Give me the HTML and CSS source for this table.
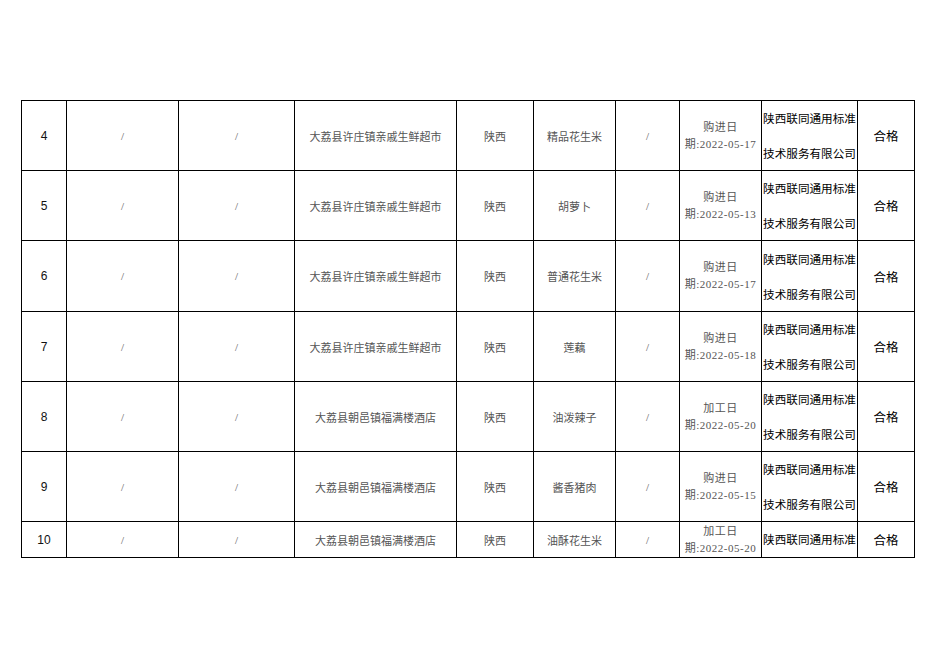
FILE: index.html
```html
<!DOCTYPE html>
<html lang="zh">
<head>
<meta charset="utf-8">
<link rel="stylesheet" href="styles.css">
</head>
<body>
<div class="page">
<table class="grid">
<colgroup>
<col class="c1"><col class="c2"><col class="c3"><col class="c4"><col class="c5"><col class="c6"><col class="c7"><col class="c8"><col class="c9"><col class="c10">
</colgroup>
<tbody>
<tr class="r70"><td class="num">4</td><td class="ser">/</td><td class="ser">/</td><td class="ser">大荔县许庄镇亲戚生鲜超市</td><td class="ser">陕西</td><td class="ser">精品花生米</td><td class="ser">/</td><td class="ser date">购进日<br>期:2022-05-17</td><td class="co"><div class="cobox">陕西联同通用标准技术服务有限公司</div></td><td class="res">合格</td></tr>
<tr class="r70"><td class="num">5</td><td class="ser">/</td><td class="ser">/</td><td class="ser">大荔县许庄镇亲戚生鲜超市</td><td class="ser">陕西</td><td class="ser">胡萝卜</td><td class="ser">/</td><td class="ser date">购进日<br>期:2022-05-13</td><td class="co"><div class="cobox">陕西联同通用标准技术服务有限公司</div></td><td class="res">合格</td></tr>
<tr class="r71"><td class="num">6</td><td class="ser">/</td><td class="ser">/</td><td class="ser">大荔县许庄镇亲戚生鲜超市</td><td class="ser">陕西</td><td class="ser">普通花生米</td><td class="ser">/</td><td class="ser date">购进日<br>期:2022-05-17</td><td class="co"><div class="cobox">陕西联同通用标准技术服务有限公司</div></td><td class="res">合格</td></tr>
<tr class="r70"><td class="num">7</td><td class="ser">/</td><td class="ser">/</td><td class="ser">大荔县许庄镇亲戚生鲜超市</td><td class="ser">陕西</td><td class="ser">莲藕</td><td class="ser">/</td><td class="ser date">购进日<br>期:2022-05-18</td><td class="co"><div class="cobox">陕西联同通用标准技术服务有限公司</div></td><td class="res">合格</td></tr>
<tr class="r70"><td class="num">8</td><td class="ser">/</td><td class="ser">/</td><td class="ser">大荔县朝邑镇福满楼酒店</td><td class="ser">陕西</td><td class="ser">油泼辣子</td><td class="ser">/</td><td class="ser date">加工日<br>期:2022-05-20</td><td class="co"><div class="cobox">陕西联同通用标准技术服务有限公司</div></td><td class="res">合格</td></tr>
<tr class="r70"><td class="num">9</td><td class="ser">/</td><td class="ser">/</td><td class="ser">大荔县朝邑镇福满楼酒店</td><td class="ser">陕西</td><td class="ser">酱香猪肉</td><td class="ser">/</td><td class="ser date">购进日<br>期:2022-05-15</td><td class="co"><div class="cobox">陕西联同通用标准技术服务有限公司</div></td><td class="res">合格</td></tr>
<tr class="r36"><td class="num">10</td><td class="ser">/</td><td class="ser">/</td><td class="ser">大荔县朝邑镇福满楼酒店</td><td class="ser">陕西</td><td class="ser">油酥花生米</td><td class="ser">/</td><td class="ser date">加工日<br>期:2022-05-20</td><td class="co"><div class="cobox short">陕西联同通用标准</div></td><td class="res">合格</td></tr>
</tbody>
</table>
</div>
</body>
</html>
```
FILE: styles.css
```css
html, body {
  margin: 0;
  padding: 0;
  background: #ffffff;
}
.page {
  padding: 100px 0 0 21px;
}
.grid {
  border-collapse: collapse;
  table-layout: fixed;
  width: 893px;
}
.c1 { width: 45px; }
.c2 { width: 112px; }
.c3 { width: 116px; }
.c4 { width: 162px; }
.c5 { width: 77px; }
.c6 { width: 82px; }
.c7 { width: 64px; }
.c8 { width: 82px; }
.c9 { width: 96px; }
.c10 { width: 57px; }
.grid td {
  border: 1px solid #000;
  padding: 0;
  text-align: center;
  vertical-align: middle;
  overflow: hidden;
}
.r70 td { height: 69px; }
.r71 td { height: 70px; }
.r36 td { height: 35px; }
.num {
  font-family: "Liberation Sans", "Noto Sans CJK SC", sans-serif;
  font-size: 12px;
  color: #111;
}
.ser {
  font-family: "Liberation Serif", "Noto Sans CJK SC", serif;
  font-size: 11px;
  color: #555;
}
.date {
  line-height: 17px;
  letter-spacing: 0.5px;
}
.co {
  font-family: "Liberation Sans", "Noto Sans CJK SC", sans-serif;
  font-size: 11.6px;
  color: #000;
}
.cobox {
  line-height: 35px;
  height: 69px;
  overflow: hidden;
  white-space: normal;
  word-break: break-all;
  margin: 0 auto;
  width: 94px;
}
.cobox.short {
  height: 35px;
}
.res {
  font-family: "Liberation Sans", "Noto Sans CJK SC", sans-serif;
  font-size: 12.5px;
  color: #000;
}
```
